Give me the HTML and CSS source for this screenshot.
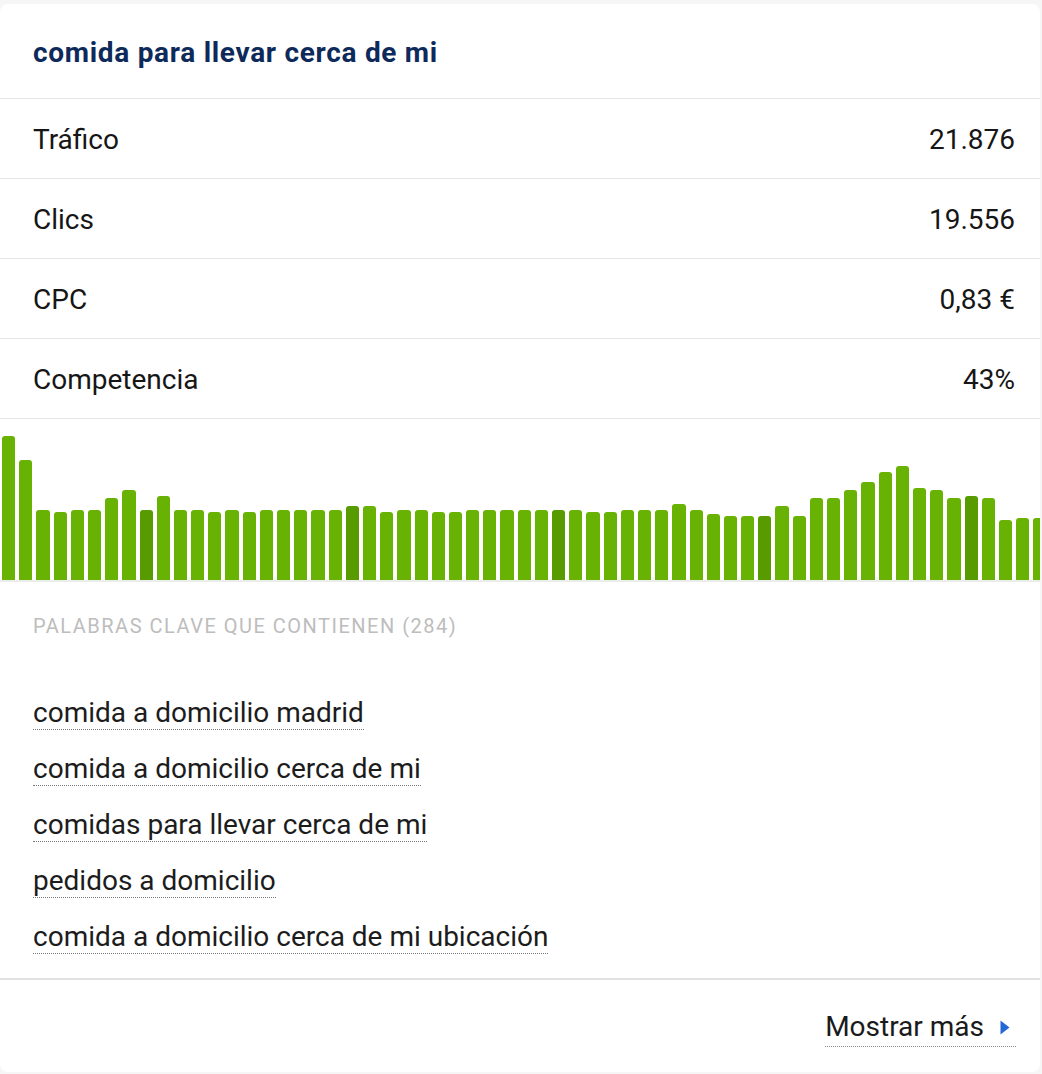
FILE: index.html
```html
<!DOCTYPE html>
<html lang="es">
<head>
<meta charset="utf-8">
<title>comida para llevar cerca de mi</title>
<link rel="stylesheet" href="styles.css">
</head>
<body>
<div class="card">
  <div class="card-header">
    <h2 class="title">comida para llevar cerca de mi</h2>
  </div>
  <div class="row"><span>Tráfico</span><span>21.876</span></div>
  <div class="row"><span>Clics</span><span>19.556</span></div>
  <div class="row"><span>CPC</span><span>0,83 €</span></div>
  <div class="row"><span>Competencia</span><span>43%</span></div>
  <div class="chart" id="chart"></div>
  <div class="keywords">
    <div class="kw-label">PALABRAS CLAVE QUE CONTIENEN (284)</div>
    <ul class="kw-list">
      <li><a class="kw">comida a domicilio madrid</a></li>
      <li><a class="kw">comida a domicilio cerca de mi</a></li>
      <li><a class="kw">comidas para llevar cerca de mi</a></li>
      <li><a class="kw">pedidos a domicilio</a></li>
      <li><a class="kw">comida a domicilio cerca de mi ubicación</a></li>
    </ul>
  </div>
  <div class="card-footer">
    <a class="more">Mostrar más <svg class="caret" width="10" height="15" viewBox="0 0 10 15"><path d="M0.5 0.5 L9.5 7.5 L0.5 14.5 Z" fill="#2467d6"/></svg></a>
  </div>
</div>
<script src="script.js"></script>
</body>
</html>
```
FILE: script.js
```js
var heights = [144,120,70,68,70,70,82,90,70,84,70,70,68,70,68,70,70,70,70,70,74,74,68,70,70,68,68,70,70,70,70,70,70,70,68,68,70,70,70,76,70,66,64,64,64,74,64,82,82,90,98,108,114,92,90,82,84,82,60,62,62];
var dark = [8,20,32,44,56];
var chart = document.getElementById('chart');
heights.forEach(function (h, i) {
  var b = document.createElement('div');
  b.className = 'bar' + (dark.indexOf(i) >= 0 ? ' bar-dark' : '');
  b.style.height = h + 'px';
  chart.appendChild(b);
});
```
FILE: styles.css
```css
html, body {
  margin: 0;
  padding: 0;
}
body {
  background: #f6f6f6;
  padding-top: 4px;
  font-family: Roboto, "Liberation Sans", Arial, sans-serif;
  color: #1a1a1a;
}
.card {
  width: 1040px;
  background: #fff;
  border-radius: 8px;
  overflow: hidden;
}
.card-header {
  height: 94px;
  display: flex;
  align-items: center;
  padding: 0 33px;
  border-bottom: 1px solid #e6e6e6;
}
.title {
  margin: 0;
  font-size: 28px;
  font-weight: 700;
  letter-spacing: 0.7px;
  color: #0e2a5a;
  line-height: 34px;
  padding-top: 4px;
}
.row {
  display: flex;
  align-items: center;
  justify-content: space-between;
  padding: 2px 25px 0 33px;
  box-sizing: border-box;
  height: 80px;
  border-bottom: 1px solid #e6e6e6;
  font-size: 28px;
  line-height: 32px;
  color: #161616;
}
.chart {
  height: 161px;
  display: flex;
  align-items: flex-end;
  gap: 4px;
  padding-left: 2px;
  border-bottom: 2px solid #ececec;
  overflow: hidden;
}
.bar {
  flex: 0 0 13.2px;
  background: #67b202;
  border-radius: 3px 3px 0 0;
}
.bar-dark {
  background: #579b01;
}
.keywords {
  padding: 32px 33px 24px;
  border-bottom: 2px solid #e2e2e2;
}
.kw-label {
  font-size: 20px;
  letter-spacing: 1.5px;
  line-height: 24px;
  color: #bdbdbd;
}
.kw-list {
  list-style: none;
  margin: 59px 0 0;
  padding: 0;
}
.kw-list li {
  margin: 0 0 23px;
}
.kw-list li:last-child {
  margin-bottom: 0;
}
.kw {
  display: inline-block;
  font-size: 28px;
  line-height: 32px;
  color: #1c1c1c;
  border-bottom: 1px dotted #777;
}
.card-footer {
  height: 92px;
  display: flex;
  align-items: center;
  justify-content: flex-end;
  padding: 0 24px;
}
.more {
  display: inline-flex;
  align-items: center;
  gap: 16px;
  font-size: 28px;
  line-height: 32px;
  padding: 0 6px 3px 0;
  margin-top: 6px;
  color: #1a1a1a;
  border-bottom: 1px dotted #888;
}
.caret {
  display: block;
}
```
